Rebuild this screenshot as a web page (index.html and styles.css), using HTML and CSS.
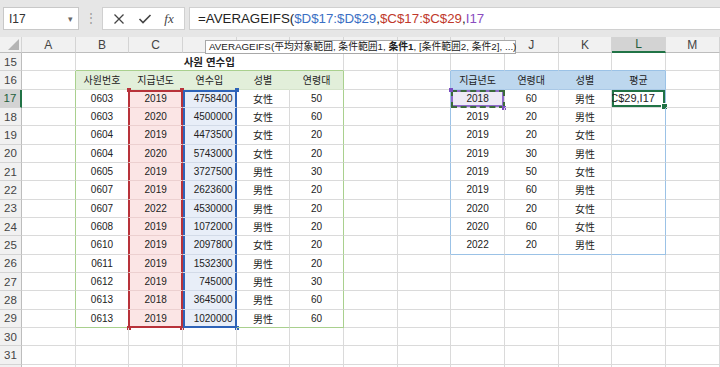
FILE: index.html
```html
<!DOCTYPE html>
<html lang="ko">
<head>
    <meta charset="UTF-8">
    <title>사원 연수입 - AVERAGEIFS</title>
    <link rel="stylesheet" href="styles.css">
</head>
<body>
    <div class="toolbar">
        <div class="namebox"><span>I17</span><span class="caret">▾</span></div>
        <div class="grip">⋮</div>
        <div class="fx-buttons">
            <svg class="ico" width="12" height="12" viewBox="0 0 12 12"><path d="M1.5 1.5 L10.5 10.5 M10.5 1.5 L1.5 10.5" stroke="#444" stroke-width="1.3" fill="none"/></svg>
            <svg class="ico" width="14" height="12" viewBox="0 0 14 12"><path d="M1.5 6 L5 9.5 L12.5 2" stroke="#444" stroke-width="1.6" fill="none"/></svg>
            <span class="fx">fx</span>
        </div>
        <div class="formula">=AVERAGEIFS(<span class="ref-d">$D$17:$D$29</span>,<span class="ref-c">$C$17:$C$29</span>,<span class="ref-i">I17</span></div>
    </div>

    <div class="sheet-wrap">
        <div class="tooltip">AVERAGEIFS(平均対象範囲, 条件範囲1, <b>条件1</b>, [条件範囲2, 条件2], ...)</div>

        <table class="sheet">
            <colgroup>
                <col class="col-rh">
                <col><col><col><col><col><col><col><col><col><col><col><col><col>
            </colgroup>
            <thead>
                <tr>
                    <th class="corner"><span class="tri"></span></th>
                    <th>A</th><th>B</th><th>C</th><th>D</th><th>E</th><th>F</th><th>G</th>
                    <th>H</th><th>I</th><th>J</th><th>K</th><th class="sel">L</th><th>M</th>
                </tr>
            </thead>
            <tbody>
                <tr>
                    <th>15</th><td></td>
                    <td colspan="5" class="title gt">사원 연수입</td>
                    <td></td><td></td>
                    <td class="bt"></td><td class="bt"></td><td class="bt"></td><td class="bt"></td><td></td>
                </tr>
                <tr>
                    <th>16</th><td class="gl"></td>
                    <td class="gh">사원번호</td><td class="gh">지급년도</td><td class="gh">연수입</td><td class="gh">성별</td><td class="gh gr">연령대</td>
                    <td></td><td class="bl"></td>
                    <td class="bh">지급년도</td><td class="bh">연령대</td><td class="bh">성별</td><td class="bh br">평균</td><td></td>
                </tr>
                <tr>
                    <th class="sel">17</th><td class="gl"></td>
                    <td class="rl">0603</td><td class="pk hr-top">2019</td><td class="num bu hb-top">4758400</td><td>女性</td><td class="gr">50</td>
                    <td></td><td class="bl"></td>
                    <td class="ref-cell">2018</td><td>60</td><td>男性</td><td class="br active"><div class="edit">C$29,I17</div></td><td></td>
                </tr>
                <tr>
                    <th>18</th><td class="gl"></td>
                    <td class="rl">0603</td><td class="pk hr">2020</td><td class="num bu hb">4500000</td><td>女性</td><td class="gr">60</td>
                    <td></td><td class="bl"></td>
                    <td>2019</td><td>20</td><td>男性</td><td class="br"></td><td></td>
                </tr>
                <tr>
                    <th>19</th><td class="gl"></td>
                    <td class="rl">0604</td><td class="pk hr">2019</td><td class="num bu hb">4473500</td><td>女性</td><td class="gr">20</td>
                    <td></td><td class="bl"></td>
                    <td>2019</td><td>20</td><td>女性</td><td class="br"></td><td></td>
                </tr>
                <tr>
                    <th>20</th><td class="gl"></td>
                    <td class="rl">0604</td><td class="pk hr">2020</td><td class="num bu hb">5743000</td><td>女性</td><td class="gr">20</td>
                    <td></td><td class="bl"></td>
                    <td>2019</td><td>30</td><td>男性</td><td class="br"></td><td></td>
                </tr>
                <tr>
                    <th>21</th><td class="gl"></td>
                    <td class="rl">0605</td><td class="pk hr">2019</td><td class="num bu hb">3727500</td><td>男性</td><td class="gr">30</td>
                    <td></td><td class="bl"></td>
                    <td>2019</td><td>50</td><td>女性</td><td class="br"></td><td></td>
                </tr>
                <tr>
                    <th>22</th><td class="gl"></td>
                    <td class="rl">0607</td><td class="pk hr">2019</td><td class="num bu hb">2623600</td><td>男性</td><td class="gr">20</td>
                    <td></td><td class="bl"></td>
                    <td>2019</td><td>60</td><td>男性</td><td class="br"></td><td></td>
                </tr>
                <tr>
                    <th>23</th><td class="gl"></td>
                    <td class="rl">0607</td><td class="pk hr">2022</td><td class="num bu hb">4530000</td><td>男性</td><td class="gr">20</td>
                    <td></td><td class="bl"></td>
                    <td>2020</td><td>20</td><td>女性</td><td class="br"></td><td></td>
                </tr>
                <tr>
                    <th>24</th><td class="gl"></td>
                    <td class="rl">0608</td><td class="pk hr">2019</td><td class="num bu hb">1072000</td><td>男性</td><td class="gr">20</td>
                    <td></td><td class="bl"></td>
                    <td>2020</td><td>60</td><td>女性</td><td class="br"></td><td></td>
                </tr>
                <tr>
                    <th>25</th><td class="gl"></td>
                    <td class="rl">0610</td><td class="pk hr">2019</td><td class="num bu hb">2097800</td><td>女性</td><td class="gr">20</td>
                    <td></td><td class="bl"></td>
                    <td class="bb">2022</td><td class="bb">20</td><td class="bb">男性</td><td class="bb br"></td><td></td>
                </tr>
                <tr>
                    <th>26</th><td class="gl"></td>
                    <td class="rl">0611</td><td class="pk hr">2019</td><td class="num bu hb">1532300</td><td>男性</td><td class="gr">20</td>
                    <td></td><td></td><td></td><td></td><td></td><td></td><td></td>
                </tr>
                <tr>
                    <th>27</th><td class="gl"></td>
                    <td class="rl">0612</td><td class="pk hr">2019</td><td class="num bu hb">745000</td><td>男性</td><td class="gr">30</td>
                    <td></td><td></td><td></td><td></td><td></td><td></td><td></td>
                </tr>
                <tr>
                    <th>28</th><td class="gl"></td>
                    <td class="rl">0613</td><td class="pk hr">2018</td><td class="num bu hb">3645000</td><td>男性</td><td class="gr">60</td>
                    <td></td><td></td><td></td><td></td><td></td><td></td><td></td>
                </tr>
                <tr>
                    <th>29</th><td class="gl"></td>
                    <td class="rl gb">0613</td><td class="pk hr-bot">2019</td><td class="num bu hb-bot">1020000</td><td class="gb">男性</td><td class="gr gb">60</td>
                    <td></td><td></td><td></td><td></td><td></td><td></td><td></td>
                </tr>
                <tr>
                    <th>30</th><td></td><td></td><td></td><td></td><td></td><td></td><td></td><td></td><td></td><td></td><td></td><td></td><td></td>
                </tr>
                <tr>
                    <th>31</th><td></td><td></td><td></td><td></td><td></td><td></td><td></td><td></td><td></td><td></td><td></td><td></td><td></td>
                </tr>
                <tr>
                    <th></th><td></td><td></td><td></td><td></td><td></td><td></td><td></td><td></td><td></td><td></td><td></td><td></td><td></td>
                </tr>
            </tbody>
        </table>
    </div>
</body>
</html>
```

FILE: styles.css
```css
* {
    margin: 0;
    padding: 0;
    box-sizing: border-box;
}

body {
    width: 720px;
    height: 367px;
    overflow: hidden;
    background: #e6e6e6;
    font-family: "Liberation Sans", "Noto Sans CJK KR", sans-serif;
    color: #222;
}

/* formula bar */
.toolbar {
    height: 37px;
    display: flex;
    align-items: flex-start;
    padding: 7px 0 0 3px;
}

.namebox {
    width: 76px;
    height: 23px;
    background: #fff;
    border: 1px solid #c8c8c8;
    display: flex;
    align-items: center;
    justify-content: space-between;
    padding: 0 5px 0 5px;
    font-size: 12px;
    color: #333;
}

.caret {
    font-size: 9px;
    color: #666;
}

.grip {
    width: 23px;
    height: 23px;
    text-align: center;
    line-height: 22px;
    font-size: 12px;
    color: #9a9a9a;
}

.fx-buttons {
    width: 83px;
    height: 23px;
    background: #fff;
    border: 1px solid #d0d0d0;
    display: flex;
    align-items: center;
    justify-content: space-around;
    padding: 0 4px;
}

.fx {
    font-family: "Liberation Serif", serif;
    font-style: italic;
    font-size: 13px;
    color: #444;
}

.formula {
    flex: 1;
    height: 23px;
    margin-left: 4px;
    background: #fff;
    border: 1px solid #d0d0d0;
    border-right: none;
    padding-left: 8px;
    font-size: 13.3px;
    line-height: 21px;
    color: #222;
    white-space: nowrap;
}

.ref-d { color: #3b6fc4; }
.ref-c { color: #c0392b; }
.ref-i { color: #8a4cbf; }

/* sheet */
.sheet-wrap {
    position: relative;
    background: #fff;
}

.tooltip {
    position: absolute;
    left: 205px;
    top: 3px;
    width: 311px;
    height: 14px;
    background: #fff;
    border: 1px solid #a8a8a8;
    font-family: "Liberation Sans", "Noto Sans CJK JP", sans-serif;
    font-size: 9.8px;
    line-height: 12px;
    padding-left: 3px;
    color: #222;
    white-space: nowrap;
    z-index: 2;
}

.sheet {
    table-layout: fixed;
    border-collapse: separate;
    border-spacing: 0;
    width: 719.7px;
    font-family: "Liberation Sans", "Noto Sans CJK KR", sans-serif;
    font-size: 10px;
}

.sheet col { width: 53.67px; }
.sheet col.col-rh { width: 22px; }

.sheet thead th {
    height: 16px;
    background: #f1f1f1;
    border-right: 1px solid #d4d4d4;
    border-bottom: 1px solid #bdbdbd;
    font-weight: normal;
    font-size: 12px;
    color: #444;
}

.sheet thead th.sel {
    background: #d3d3d3;
    color: #1f5f3c;
    border-bottom: 2px solid #217346;
}

.corner {
    position: relative;
}

.tri {
    position: absolute;
    right: 2px;
    bottom: 2px;
    width: 0;
    height: 0;
    border-left: 11px solid transparent;
    border-bottom: 11px solid #b4b4b4;
}

.sheet tbody tr { height: 18.33px; }

.sheet tbody th {
    background: #f1f1f1;
    border-right: 1px solid #bdbdbd;
    border-bottom: 1px solid #d4d4d4;
    font-weight: normal;
    font-size: 11.5px;
    color: #444;
    text-align: center;
}

.sheet tbody th.sel {
    background: #d3d3d3;
    color: #1f5f3c;
    border-right: 2px solid #217346;
}

.sheet td {
    border-right: 1px solid #dadada;
    border-bottom: 1px solid #dadada;
    text-align: center;
    white-space: nowrap;
    padding: 0 2px;
    color: #222;
    position: relative;
}

.sheet td.num {
    text-align: right;
    padding-right: 3px;
}

.title {
    font-weight: bold;
    font-size: 10.5px;
}

/* left table (green) */
.gh {
    background: #e2efda;
    border-right-color: #e2efda !important;
    border-bottom-color: #d6e4cc !important;
    color: #333;
}

.gt { border-bottom-color: #a9d08e !important; }
.gl { border-right-color: #a9d08e !important; }
.sheet td.gr { border-right-color: #a9d08e !important; }
.gb { border-bottom-color: #a9d08e !important; }

/* right table (blue) */
.bh {
    background: #bdd7ee;
    border-right-color: #bdd7ee !important;
    border-bottom-color: #a9c8e6 !important;
    color: #333;
}

.bt { border-bottom-color: #9bc2e6 !important; }
.bl { border-right-color: #9bc2e6 !important; }
.sheet td.br { border-right-color: #9bc2e6 !important; }
.bb { border-bottom-color: #9bc2e6 !important; }

/* referenced ranges */
.rl { border-right-color: #b8323a !important; }

.pk {
    background: #fbe5e5;
    border-right-color: #b8323a !important;
    border-bottom-color: #ecd0d0 !important;
}

.hr { box-shadow: inset 1px 0 0 #b8323a, inset -1px 0 0 #b8323a; }
.hr-top { box-shadow: inset 1px 0 0 #b8323a, inset -1px 0 0 #b8323a, inset 0 2px 0 #b8323a; }
.hr-bot { box-shadow: inset 1px 0 0 #b8323a, inset -1px 0 0 #b8323a, inset 0 -1px 0 #b8323a; border-bottom-color: #b8323a !important; }

.bu {
    background: #e8eef8;
    border-right-color: #2e63b8 !important;
    border-bottom-color: #d3dbe8 !important;
}

.hb { box-shadow: inset 2px 0 0 #2e63b8, inset -1px 0 0 #2e63b8; }
.hb-top { box-shadow: inset 2px 0 0 #2e63b8, inset -1px 0 0 #2e63b8, inset 0 2px 0 #2e63b8; }
.hb-bot { box-shadow: inset 2px 0 0 #2e63b8, inset -1px 0 0 #2e63b8, inset 0 -1px 0 #2e63b8; border-bottom-color: #2e63b8 !important; }

/* corner handles of the highlighted ranges */
.hr-top::before, .hr-top::after,
.hr-bot::before, .hr-bot::after,
.hb-top::after, .hb-bot::after {
    content: "";
    position: absolute;
    width: 4px;
    height: 4px;
}

.hr-top::before, .hr-top::after,
.hr-bot::before, .hr-bot::after { background: #b8323a; }
.hb-top::after, .hb-bot::after { background: #2e63b8; }

.hr-top::before { left: -2px; top: -2px; }
.hr-top::after { right: -2px; top: -2px; }
.hr-bot::before { left: -2px; bottom: -3px; }
.hr-bot::after { right: -2px; bottom: -3px; }
.hb-top::after { right: -3px; top: -2px; }
.hb-bot::after { right: -3px; bottom: -3px; }

/* I17 criteria reference */
.ref-cell {
    background: #eeeaf6;
    outline: 2px dashed #3b6a3b;
    outline-offset: -2px;
    box-shadow: inset 0 0 0 2px #8e6bc9;
}

.ref-cell::before, .ref-cell::after {
    content: "";
    position: absolute;
    width: 4px;
    height: 4px;
    background: #7a4cc0;
}

.ref-cell::before { left: -2px; top: -2px; }
.ref-cell::after { right: -2px; bottom: -3px; }

/* active cell being edited */
.active {
    box-shadow: inset 0 0 0 2px #217346;
    padding: 0 !important;
}

.active::after {
    content: "";
    position: absolute;
    right: -3px;
    bottom: -3px;
    width: 5px;
    height: 5px;
    background: #217346;
    border: 1px solid #fff;
}

.edit {
    overflow: hidden;
    text-align: left;
    text-indent: -2px;
    font-size: 11px;
    color: #222;
}
```
